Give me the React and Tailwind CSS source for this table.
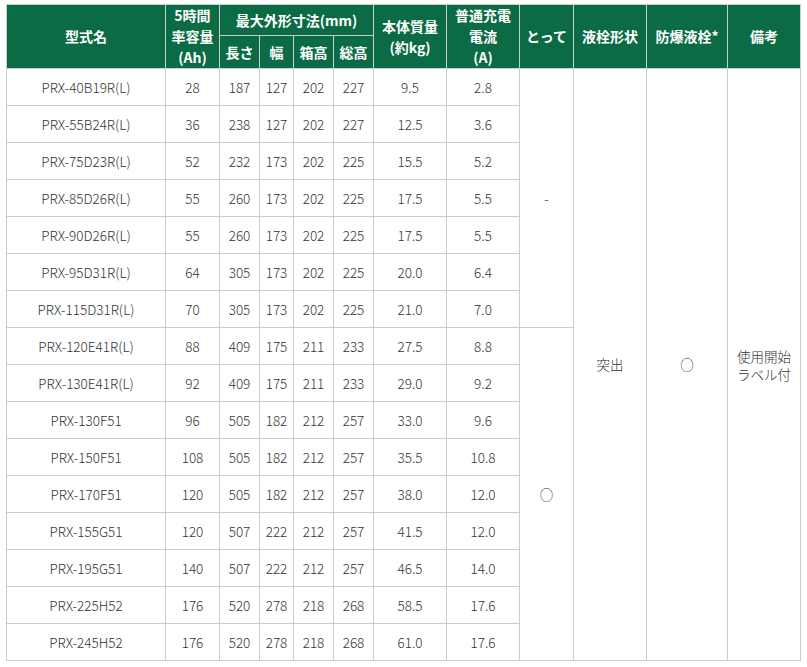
import React from "react";

const rows = [
  ["PRX-40B19R(L)", "28", "187", "127", "202", "227", "9.5", "2.8"],
  ["PRX-55B24R(L)", "36", "238", "127", "202", "227", "12.5", "3.6"],
  ["PRX-75D23R(L)", "52", "232", "173", "202", "225", "15.5", "5.2"],
  ["PRX-85D26R(L)", "55", "260", "173", "202", "225", "17.5", "5.5"],
  ["PRX-90D26R(L)", "55", "260", "173", "202", "225", "17.5", "5.5"],
  ["PRX-95D31R(L)", "64", "305", "173", "202", "225", "20.0", "6.4"],
  ["PRX-115D31R(L)", "70", "305", "173", "202", "225", "21.0", "7.0"],
  ["PRX-120E41R(L)", "88", "409", "175", "211", "233", "27.5", "8.8"],
  ["PRX-130E41R(L)", "92", "409", "175", "211", "233", "29.0", "9.2"],
  ["PRX-130F51", "96", "505", "182", "212", "257", "33.0", "9.6"],
  ["PRX-150F51", "108", "505", "182", "212", "257", "35.5", "10.8"],
  ["PRX-170F51", "120", "505", "182", "212", "257", "38.0", "12.0"],
  ["PRX-155G51", "120", "507", "222", "212", "257", "41.5", "12.0"],
  ["PRX-195G51", "140", "507", "222", "212", "257", "46.5", "14.0"],
  ["PRX-225H52", "176", "520", "278", "218", "268", "58.5", "17.6"],
  ["PRX-245H52", "176", "520", "278", "218", "268", "61.0", "17.6"],
];

const th = "border border-[#cccccc] bg-[#0b6b45] text-white font-bold text-[14px] leading-[21px] text-center align-middle p-0";
const td = "border border-[#cccccc] text-[#333333] text-[13.5px] font-light text-center align-middle p-0";

const App = () => {
  return (
    <div className="bg-white w-[807px] h-[667px] pt-[4px] pl-[6px]" style={{ fontFamily: '"Noto Sans CJK JP", "Noto Sans", sans-serif' }}>
      <table className="table-fixed border-collapse w-[795px]">
        <colgroup>
          <col className="w-[159px]" />
          <col className="w-[54px]" />
          <col className="w-[40px]" />
          <col className="w-[34px]" />
          <col className="w-[40px]" />
          <col className="w-[40px]" />
          <col className="w-[73px]" />
          <col className="w-[73px]" />
          <col className="w-[54px]" />
          <col className="w-[73px]" />
          <col className="w-[81px]" />
          <col className="w-[73px]" />
        </colgroup>
        <thead>
          <tr className="h-[31px]">
            <th rowSpan={2} className={th}>型式名</th>
            <th rowSpan={2} className={th}>5時間<br />率容量<br />(Ah)</th>
            <th colSpan={4} className={th}>最大外形寸法(mm)</th>
            <th rowSpan={2} className={th}>本体質量<br />(約kg)</th>
            <th rowSpan={2} className={th}>普通充電<br />電流<br />(A)</th>
            <th rowSpan={2} className={th}>とって</th>
            <th rowSpan={2} className={th}>液栓形状</th>
            <th rowSpan={2} className={th}>防爆液栓*</th>
            <th rowSpan={2} className={th}>備考</th>
          </tr>
          <tr className="h-[32px]">
            <th className={th}>長さ</th>
            <th className={th}>幅</th>
            <th className={th}>箱高</th>
            <th className={th}>総高</th>
          </tr>
        </thead>
        <tbody>
          {rows.map((r, i) => (
            <tr key={r[0]} className="h-[37px]">
              {r.map((c, j) => (
                <td key={j} className={td}>{c}</td>
              ))}
              {i === 0 && <td rowSpan={7} className={td}>-</td>}
              {i === 7 && <td rowSpan={9} className={td}>○</td>}
              {i === 0 && (
                <>
                  <td rowSpan={16} className={td}>突出</td>
                  <td rowSpan={16} className={td}>○</td>
                  <td rowSpan={16} className={`${td} leading-[18px]`}>
                    <span className="block">使用開始</span>
                    <span className="block">ラベル付</span>
                  </td>
                </>
              )}
            </tr>
          ))}
        </tbody>
      </table>
    </div>
  );
};

export default App;
